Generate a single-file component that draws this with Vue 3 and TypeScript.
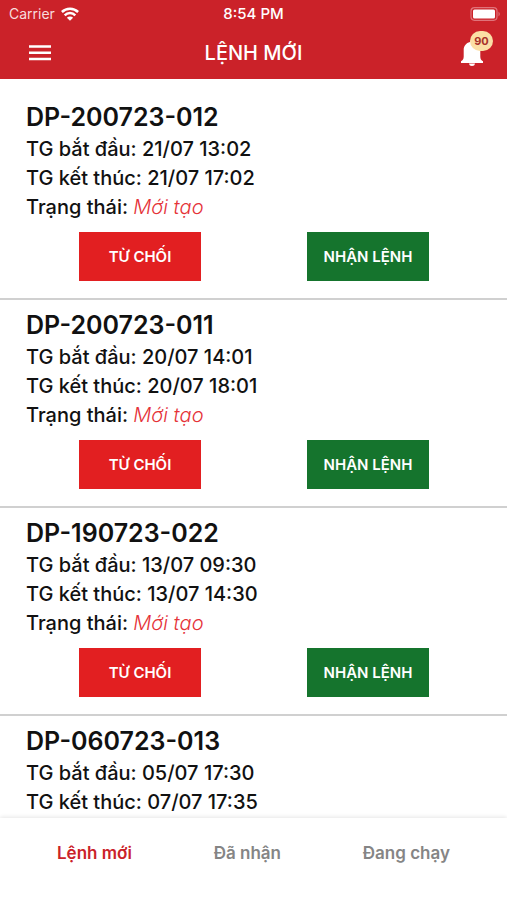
<script setup lang="ts">
interface Order {
  code: string
  start: string
  end: string
  status: string
}

const orders: Order[] = [
  { code: 'DP-200723-012', start: '21/07 13:02', end: '21/07 17:02', status: 'Mới tạo' },
  { code: 'DP-200723-011', start: '20/07 14:01', end: '20/07 18:01', status: 'Mới tạo' },
  { code: 'DP-190723-022', start: '13/07 09:30', end: '13/07 14:30', status: 'Mới tạo' },
  { code: 'DP-060723-013', start: '05/07 17:30', end: '07/07 17:35', status: 'Mới tạo' },
]

const tabs = [
  { label: 'Lệnh mới', active: true },
  { label: 'Đã nhận', active: false },
  { label: 'Đang chạy', active: false },
]
</script>

<template>
  <div class="screen">
    <header class="top">
      <div class="status-bar">
        <span class="carrier">
          Carrier
          <svg width="18" height="14" viewBox="0 0 18 14" aria-hidden="true">
            <path d="M.9 5a11.500 11.500 0 0 1 16.200 0M3.700 8.300a7.500 7.500 0 0 1 10.600 0" fill="none" stroke="#fff" stroke-width="2.500" />
            <path d="M9 13.800 5.900 10.700a4.400 4.400 0 0 1 6.200 0z" fill="#fff" />
          </svg>
        </span>
        <span class="clock">8:54 PM</span>
        <svg class="battery" width="31" height="14" viewBox="0 0 31 14" aria-hidden="true">
          <rect x="1" y=".7" width="26" height="12.600" rx="3.500" fill="none" stroke="#e0737a" stroke-width="1.200" />
          <rect x="3" y="2.500" width="22" height="9" rx="1.500" fill="#fff" />
          <path d="M28.500 4.500q2.600 2.500 0 5z" fill="#e0737a" />
        </svg>
      </div>
      <div class="title-bar">
        <button class="icon-button menu" type="button" aria-label="Menu">
          <svg width="24" height="18" viewBox="0 0 24 18"><path d="M1 2.500h22M1 8.800h22M1 15h22" stroke="#fff" stroke-width="2.400" /></svg>
        </button>
        <h1>LỆNH MỚI</h1>
        <button class="icon-button bell" type="button" aria-label="90">
          <svg width="24" height="28" viewBox="0 0 24 28">
            <path d="M12 1c1.200 0 2 .8 2 2 4 1 6.300 4 6.300 8v6.500c0 2.500 1 4 2.700 4.800V24H1v-1.700c1.700-.8 2.700-2.300 2.700-4.800V11c0-4 2.300-7 6.300-8 0-1.200.8-2 2-2zM9 24.500h6c-.2 1.700-1.300 2.500-3 2.500s-2.800-.8-3-2.500z" fill="#fff" />
          </svg>
          <span class="badge">90</span>
        </button>
      </div>
    </header>

    <main class="orders">
      <article v-for="order in orders" :key="order.code" class="order">
        <h2>{{ order.code }}</h2>
        <p>TG bắt đầu: {{ order.start }}</p>
        <p>TG kết thúc: {{ order.end }}</p>
        <p>Trạng thái: <em>{{ order.status }}</em></p>
        <div class="actions">
          <button class="action reject" type="button">TỪ CHỐI</button>
          <button class="action accept" type="button">NHẬN LỆNH</button>
        </div>
      </article>
    </main>

    <nav class="tabs">
      <a v-for="tab in tabs" :key="tab.label" href="#" :class="{ active: tab.active }">{{ tab.label }}</a>
    </nav>
  </div>
</template>

<style scoped>
.screen {
  height: 100vh;
  display: flex;
  flex-direction: column;
  overflow: hidden;
  background: #fff;
  color: #111;
  font-family: Inter, "Noto Sans", sans-serif;
}
.top {
  flex: none;
  background: #cb2229;
  color: #fff;
}
.status-bar {
  display: grid;
  grid-template-columns: 1fr auto 1fr;
  align-items: center;
  height: 27px;
  padding: 0 6px;
  font-size: 14px;
}
.carrier {
  display: flex;
  align-items: center;
  gap: 6px;
  padding-left: 3px;
  color: #f8dcdd;
}
.clock {
  font-size: 15px;
  font-weight: 500;
}
.battery {
  justify-self: end;
}
.title-bar {
  display: grid;
  grid-template-columns: 1fr auto 1fr;
  align-items: center;
  height: 52px;
  padding: 0 23px;
}
h1 {
  margin: 0;
  font-size: 20px;
  font-weight: 500;
}
.icon-button {
  position: relative;
  display: flex;
  padding: 0;
  border: 0;
  background: none;
}
.menu {
  justify-self: start;
  padding-left: 5px;
}
.bell {
  justify-self: end;
}
.badge {
  position: absolute;
  top: -8px;
  right: -9px;
  width: 23px;
  height: 20px;
  border-radius: 10px;
  background: #fbdfa6;
  color: #a8322b;
  font: 700 11px/20px Inter, sans-serif;
  text-align: center;
}
.orders {
  flex: 1;
  min-height: 0;
  overflow-y: auto;
  scrollbar-width: none;
  padding-top: 13px;
}
.order {
  padding: 8px 25px 17px 26px;
  border-bottom: 2px solid #d0d0d0;
}
h2 {
  margin: 0;
  font-size: 25px;
  font-weight: 600;
  line-height: 34px;
}
p {
  margin: 0;
  font-size: 20px;
  font-weight: 500;
  line-height: 29px;
}
p:first-of-type {
  padding-top: 1px;
}
em {
  color: #e53238;
  font-weight: 300;
}
.actions {
  display: flex;
  justify-content: space-around;
  padding-top: 10px;
}
.action {
  width: 122px;
  height: 49px;
  padding: 0;
  border: 0;
  color: #fff;
  font: 600 15px Inter, sans-serif;
}
.reject {
  background: #e21f21;
}
.accept {
  background: #15742d;
}
.tabs {
  flex: none;
  display: flex;
  justify-content: space-between;
  align-items: center;
  height: 82px;
  box-sizing: border-box;
  padding: 0 57px 12px;
  background: #fff;
  box-shadow: 0 -1px 4px #0000001a;
}
.tabs a {
  color: #858585;
  font-size: 17px;
  font-weight: 600;
  text-decoration: none;
}
.tabs .active {
  color: #cb2229;
}
</style>

<style>
body {
  margin: 0;
}
</style>
